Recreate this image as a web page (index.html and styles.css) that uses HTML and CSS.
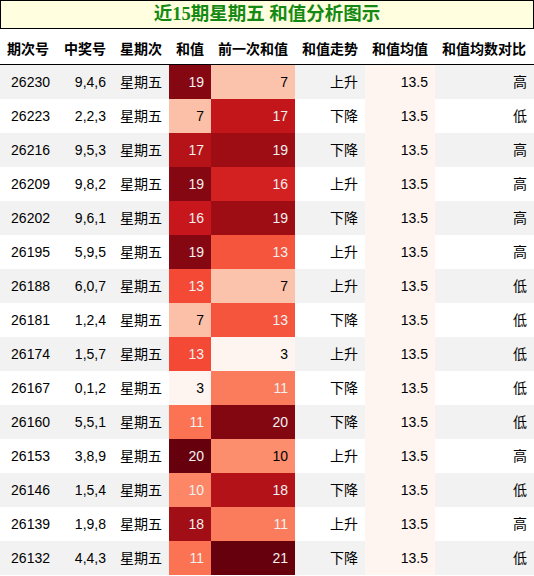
FILE: index.html
```html
<!DOCTYPE html>
<html lang="zh">
<head>
  <meta charset="UTF-8">
  <title>近15期星期五 和值分析图示</title>
  <link rel="stylesheet" href="styles.css">
</head>
<body>
  <div class="title">近15期星期五 和值分析图示</div>

  <table class="sum-table">
    <colgroup>
      <col style="width:57px"><col style="width:56px"><col style="width:56px"><col style="width:42px">
      <col style="width:84px"><col style="width:70px"><col style="width:70px"><col style="width:99px">
    </colgroup>
    <thead>
      <tr>
        <th>期次号</th>
        <th>中奖号</th>
        <th>星期次</th>
        <th>和值</th>
        <th>前一次和值</th>
        <th>和值走势</th>
        <th>和值均值</th>
        <th>和值均数对比</th>
      </tr>
    </thead>
    <tbody id="rows"></tbody>
  </table>

  <script>
    const data = [
      [26230, '9,4,6', 19, 7, '上升', '高'],
      [26223, '2,2,3', 7, 17, '下降', '低'],
      [26216, '9,5,3', 17, 19, '下降', '高'],
      [26209, '9,8,2', 19, 16, '上升', '高'],
      [26202, '9,6,1', 16, 19, '下降', '高'],
      [26195, '5,9,5', 19, 13, '上升', '高'],
      [26188, '6,0,7', 13, 7, '上升', '低'],
      [26181, '1,2,4', 7, 13, '下降', '低'],
      [26174, '1,5,7', 13, 3, '上升', '低'],
      [26167, '0,1,2', 3, 11, '下降', '低'],
      [26160, '5,5,1', 11, 20, '下降', '低'],
      [26153, '3,8,9', 20, 10, '上升', '高'],
      [26146, '1,5,4', 10, 18, '下降', '低'],
      [26139, '1,9,8', 18, 11, '上升', '高'],
      [26132, '4,4,3', 11, 21, '下降', '低']
    ];

    // matplotlib "Reds"
    const reds = ['#fff5f0', '#fee0d2', '#fcbba1', '#fc9272', '#fb6a4a',
                  '#ef3b2c', '#cb181d', '#a50f15', '#67000d'];

    function hexToRgb(h) {
      return [1, 3, 5].map(i => parseInt(h.substr(i, 2), 16));
    }

    function redsAt(t) {
      t = Math.max(0, Math.min(1, t));
      const pos = t * (reds.length - 1);
      const i = Math.min(Math.floor(pos), reds.length - 2);
      const f = pos - i;
      const a = hexToRgb(reds[i]);
      const b = hexToRgb(reds[i + 1]);
      return a.map((v, k) => Math.round(v + (b[k] - v) * f));
    }

    function luminance(rgb) {
      const c = rgb.map(v => {
        v = v / 255;
        return v <= 0.03928 ? v / 12.92 : Math.pow((v + 0.055) / 1.055, 2.4);
      });
      return 0.2126 * c[0] + 0.7152 * c[1] + 0.0722 * c[2];
    }

    function heatCell(value, min, max) {
      const t = max === min ? 0 : (value - min) / (max - min);
      const rgb = redsAt(t);
      const text = luminance(rgb) < 0.408 ? '#f1f1f1' : '#000000';
      return `<td style="background-color: rgb(${rgb.join(',')}); color: ${text}">${value}</td>`;
    }

    const sums = data.map(r => r[2]);
    const prevs = data.map(r => r[3]);
    const sMin = Math.min(...sums), sMax = Math.max(...sums);
    const pMin = Math.min(...prevs), pMax = Math.max(...prevs);

    let html = '';
    data.forEach(r => {
      html += '<tr>';
      html += `<td>${r[0]}</td>`;
      html += `<td>${r[1]}</td>`;
      html += '<td>星期五</td>';
      html += heatCell(r[2], sMin, sMax);
      html += heatCell(r[3], pMin, pMax);
      html += `<td>${r[4]}</td>`;
      html += '<td class="mean">13.5</td>';
      html += `<td>${r[5]}</td>`;
      html += '</tr>';
    });
    document.getElementById('rows').innerHTML = html;
  </script>
</body>
</html>
```

FILE: styles.css
```css
body {
  margin: 0;
  padding: 0;
  background-color: white;
  font-family: "Liberation Sans", "Noto Sans CJK SC", sans-serif;
  font-size: 14px;
  color: #000;
}
.title {
  width: 534px;
  box-sizing: border-box;
  height: 29px;
  border: 1px solid black;
  background-color: #ffffe0;
  color: #148a14;
  font-family: "Liberation Serif", "Noto Sans CJK SC", serif;
  font-weight: bold;
  font-size: 18.5px;
  line-height: 27px;
  text-align: center;
}
.sum-table {
  width: 534px;
  border-collapse: collapse;
  table-layout: fixed;
}
.sum-table th {
  background-color: white;
  font-weight: bold;
  text-align: left;
  padding: 10px 7px 5px;
  line-height: 20px;
  white-space: nowrap;
  border-bottom: 1px solid black;
}
.sum-table td {
  padding: 7px;
  line-height: 20px;
  text-align: right;
  white-space: nowrap;
}
.sum-table tbody tr:nth-child(odd) {
  background-color: #f2f2f2;
}
.sum-table tbody tr:nth-child(even) {
  background-color: white;
}
.sum-table td.mean {
  background-color: #fff5f0;
}
```
